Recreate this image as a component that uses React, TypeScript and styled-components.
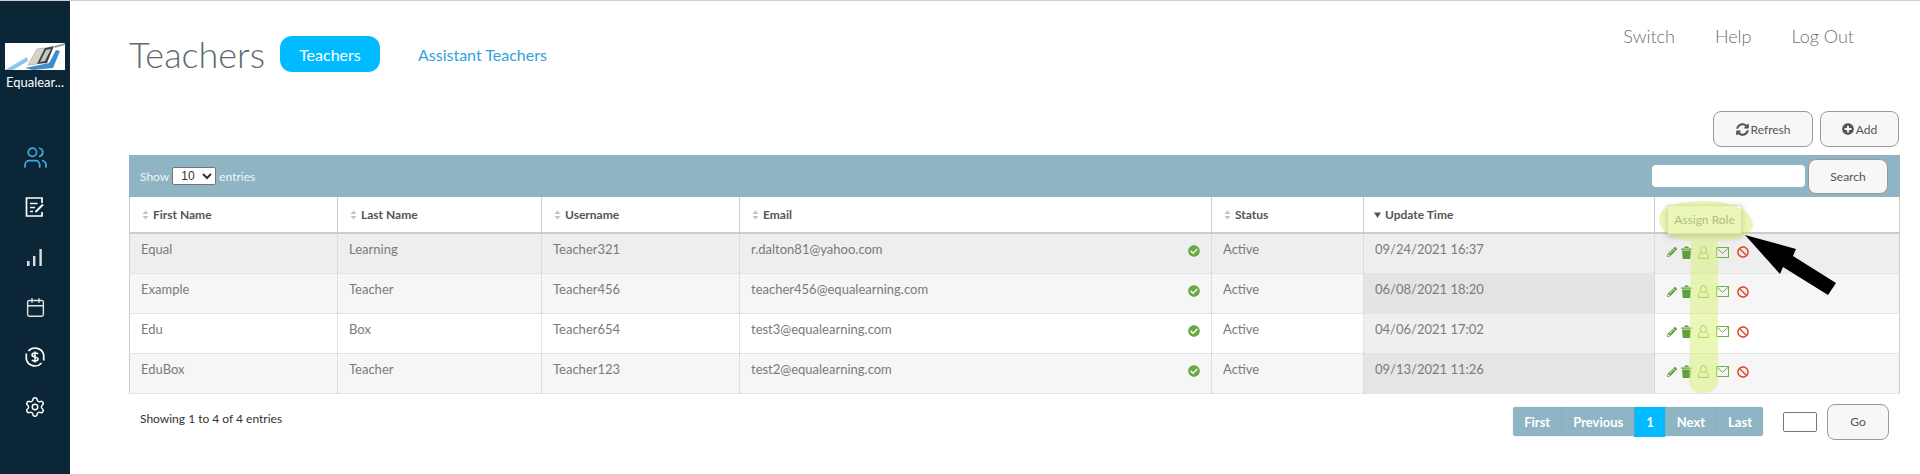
import React from 'react'
import styled, { createGlobalStyle } from 'styled-components'
import { Users, Calendar, Settings } from 'lucide-react'
import { FaSyncAlt, FaPlusCircle, FaCheckCircle, FaPencilAlt, FaBan } from 'react-icons/fa'

const GlobalStyle = createGlobalStyle`
  html, body {
    margin: 0;
    padding: 0;
    background: #ffffff;
    font-family: Lato, "Liberation Sans", sans-serif;
  }
  * { box-sizing: border-box; }
`

const rows = [
  { first: 'Equal', last: 'Learning', user: 'Teacher321', email: 'r.dalton81@yahoo.com', time: '09/24/2021 16:37' },
  { first: 'Example', last: 'Teacher', user: 'Teacher456', email: 'teacher456@equalearning.com', time: '06/08/2021 18:20' },
  { first: 'Edu', last: 'Box', user: 'Teacher654', email: 'test3@equalearning.com', time: '04/06/2021 17:02' },
  { first: 'EduBox', last: 'Teacher', user: 'Teacher123', email: 'test2@equalearning.com', time: '09/13/2021 11:26' },
]

const columns = [
  { label: 'First Name', width: 208 },
  { label: 'Last Name', width: 204 },
  { label: 'Username', width: 198 },
  { label: 'Email', width: 472 },
  { label: 'Status', width: 152 },
  { label: 'Update Time', width: 291, sorted: true },
]

function SortCarets() {
  return (
    <svg width="7" height="10" viewBox="0 0 7 10">
      <path d="M3.5 0.5 L6.5 4 L0.5 4 Z M3.5 9.5 L6.5 6 L0.5 6 Z" fill="#c4c4c4" />
    </svg>
  )
}

function SortDown() {
  return (
    <SortDownSvg width="7" height="10" viewBox="0 0 7 10">
      <path d="M0 2.5 L7 2.5 L3.5 8 Z" fill="#555555" />
    </SortDownSvg>
  )
}

function Logo() {
  return (
    <LogoBox viewBox="0 0 60 27" preserveAspectRatio="none">
      <rect width="60" height="27" fill="#ffffff" />
      <path d="M0 27 L22 14 L23 18 L8 27 Z" fill="#8ec7e6" />
      <path d="M20 25 L44 20 L51 7 L55 8 L48 25 L28 27 Z" fill="#3f8ecb" />
      <path d="M23 22 L32 6 L40 5 L32 21 Z" fill="#d9d2c6" stroke="#b9b2a8" strokeWidth="0.8" />
      <path d="M32 21 L40 5 L49 3 L42 20 Z" fill="#3a444c" />
      <path d="M35 19 L41 7 L46 6 L40 18 Z" fill="#cfc8bc" />
      <path d="M49 3 L60 0 L60 2 L50 5 Z" fill="#9aa3a8" />
    </LogoBox>
  )
}

function DocIcon() {
  return (
    <svg width="20" height="20" viewBox="0 0 20 20" fill="none" stroke="#ffffff" strokeWidth="1.7">
      <path d="M17 6 V1 H1.5 V19 H17 V15" />
      <path d="M5 6.5 H12.5 M5 10.5 H10 M5 14.5 H8" />
      <path d="M10.5 15 L18 7.5" strokeWidth="2" />
    </svg>
  )
}

function BarsIcon() {
  return (
    <svg width="16" height="17" viewBox="0 0 16 17" fill="#d9dee2">
      <rect x="0" y="12" width="2.6" height="5" />
      <rect x="6" y="7" width="2.4" height="10" />
      <rect x="12.4" y="0" width="2.4" height="17" />
    </svg>
  )
}

function MoneyIcon() {
  return (
    <svg width="20" height="20" viewBox="0 0 20 20" fill="none" stroke="#ffffff" strokeWidth="1.7">
      <path d="M3.4 4 A9 9 0 0 1 18.8 8" />
      <path d="M16.6 16 A9 9 0 0 1 1.2 12" />
      <path d="M1.3 6.5 V12 M18.7 8 V13.5" />
      <path d="M13 7 C12 5.5 7 5.5 7 8 C7 10.5 13 9.5 13 12 C13 14.5 8 14.5 7 13 M10 4.5 V15.5" strokeWidth="1.6" />
    </svg>
  )
}

function TrashIcon() {
  return (
    <svg width="11" height="13" viewBox="0 0 11 13">
      <path d="M0 2.6 H11 V3.8 H0 Z M3.6 1 C4.5 0 6.5 0 7.4 1 L8 2 H3 Z" fill="#5da139" />
      <path d="M1 4.6 H10 L9.2 13 H1.8 Z" fill="#5da139" />
    </svg>
  )
}

function UserIcon() {
  return (
    <svg width="11" height="13" viewBox="0 0 11 13" fill="none" stroke="#84bd4a" strokeWidth="1">
      <ellipse cx="5.5" cy="4" rx="3" ry="3.5" />
      <path d="M3.1 6.6 C1.2 7.6 0.5 9 0.5 12.4 H10.5 C10.5 9 9.8 7.6 7.9 6.6" />
    </svg>
  )
}

function MailIcon() {
  return (
    <svg width="13" height="11" viewBox="0 0 13 11" fill="none" stroke="#6cb04a" strokeWidth="1">
      <rect x="0.5" y="0.5" width="12" height="10" />
      <path d="M0.5 0.8 L6.5 6.4 L12.5 0.8" />
    </svg>
  )
}

export default function App() {
  return (
    <Page>
      <GlobalStyle />
      <Sidebar>
        <Logo />
        <OrgName>Equalear...</OrgName>
        <NavIcons>
          <NavSlot><Users size={25} color="#3ea8dd" strokeWidth={1.7} /></NavSlot>
          <NavSlot><DocIcon /></NavSlot>
          <NavSlot><BarsIcon /></NavSlot>
          <NavSlot><Calendar size={21} color="#dfe4e7" strokeWidth={1.6} /></NavSlot>
          <NavSlot><MoneyIcon /></NavSlot>
          <NavSlot><Settings size={22} color="#ffffff" strokeWidth={1.6} /></NavSlot>
        </NavIcons>
      </Sidebar>

      <Main>
        <Header>
          <TitleRow>
            <Title>Teachers</Title>
            <TabPill>Teachers</TabPill>
            <TabLink>Assistant Teachers</TabLink>
          </TitleRow>
          <TopLinks>
            <TopLink>Switch</TopLink>
            <TopLink>Help</TopLink>
            <TopLink>Log Out</TopLink>
          </TopLinks>
        </Header>

        <Actions>
          <ActionButton $width={100}><FaSyncAlt size={13} color="#555" />Refresh</ActionButton>
          <ActionButton $width={79}><FaPlusCircle size={12} color="#555" />Add</ActionButton>
        </Actions>

        <Toolbar>
          <ShowLabel>
            Show
            <EntriesSelect defaultValue="10">
              <option>10</option>
              <option>25</option>
            </EntriesSelect>
            entries
          </ShowLabel>
          <SearchGroup>
            <SearchInput />
            <SearchButton>Search</SearchButton>
          </SearchGroup>
        </Toolbar>

        <Table>
          <colgroup>
            {columns.map((c) => <col key={c.label} width={c.width} />)}
            <col />
          </colgroup>
          <thead>
            <tr>
              {columns.map((c) => (
                <HeadCell key={c.label}>
                  <HeadInner>
                    {c.sorted ? <SortDown /> : <SortCarets />}
                    {c.label}
                  </HeadInner>
                </HeadCell>
              ))}
              <HeadCell>
                <Tooltip>Assign Role</Tooltip>
              </HeadCell>
            </tr>
          </thead>
          <tbody>
            {rows.map((r, i) => (
              <Row key={r.user} $index={i}>
                <Cell>{r.first}</Cell>
                <Cell>{r.last}</Cell>
                <Cell>{r.user}</Cell>
                <Cell>
                  <EmailInner>
                    {r.email}
                    <FaCheckCircle size={12} color="#6aa93f" />
                  </EmailInner>
                </Cell>
                <Cell>Active</Cell>
                <TimeCell $index={i}>{r.time}</TimeCell>
                <Cell>
                  <IconRow>
                    <FaPencilAlt size={10} color="#5da139" />
                    <TrashIcon />
                    <UserIcon />
                    <MailIcon />
                    <FaBan size={12} color="#e2492f" />
                  </IconRow>
                </Cell>
              </Row>
            ))}
          </tbody>
        </Table>

        <Footer>
          <Showing>Showing 1 to 4 of 4 entries</Showing>
          <Pager>
            <PageButton>First</PageButton>
            <PageButton>Previous</PageButton>
            <CurrentPage>1</CurrentPage>
            <PageButton>Next</PageButton>
            <PageButton>Last</PageButton>
          </Pager>
          <GoInput />
          <GoButton>Go</GoButton>
        </Footer>
      </Main>

      {/* marker scribble and arrow drawn on top of the screenshot */}
      <Annotation viewBox="0 0 1920 474">
        <path
          d="M1659 218 C1660 206 1680 201 1705 201 C1735 201 1753 212 1753 225 C1753 236 1735 241 1718 241 L1718 380 C1718 390 1710 393 1702 393 C1694 393 1689 389 1689 380 L1691 241 C1672 240 1659 230 1659 218 Z"
          fill="rgba(214, 240, 110, 0.5)"
        />
        <path
          d="M1745 235 L1796 249 L1793 256 L1836 283 L1828 295 L1783 267 L1780 274 Z"
          fill="#000000"
        />
      </Annotation>
    </Page>
  )
}

const Page = styled.div`
  position: relative;
  display: flex;
  width: 1920px;
  height: 474px;
  overflow: hidden;
  border-top: 1px solid #cfcfcf;
  background: #ffffff;
`

const Sidebar = styled.aside`
  width: 70px;
  flex-shrink: 0;
  background: #0a2637;
  display: flex;
  flex-direction: column;
  align-items: center;
  padding-top: 42px;
`

const LogoBox = styled.svg`
  width: 60px;
  height: 27px;
  display: block;
  filter: blur(0.4px);
`

const OrgName = styled.div`
  margin-top: 5px;
  width: 60px;
  font-size: 13px;
  line-height: 15px;
  color: #ffffff;
  text-align: center;
  white-space: nowrap;
`

const NavIcons = styled.nav`
  margin-top: 42px;
  display: flex;
  flex-direction: column;
  align-items: center;
`

const NavSlot = styled.div`
  width: 70px;
  height: 50px;
  display: flex;
  align-items: center;
  justify-content: center;
`

const Main = styled.main`
  flex: 1;
  min-width: 0;
  padding: 0 20px 0 59px;
`

const Header = styled.header`
  height: 110px;
  display: flex;
  justify-content: space-between;
  align-items: flex-start;
`

const TitleRow = styled.div`
  display: flex;
  align-items: center;
  margin-top: 35px;
`

const Title = styled.h1`
  margin: 0 15px 0 0;
  font-size: 36px;
  line-height: 36px;
  font-weight: 300;
  color: #5e6b74;
`

const TabPill = styled.div`
  width: 100px;
  height: 36px;
  border-radius: 12px;
  background: #00bbff;
  color: #ffffff;
  font-size: 16px;
  display: flex;
  align-items: center;
  justify-content: center;
`

const TabLink = styled.div`
  margin-left: 38px;
  font-size: 16px;
  color: #2ea3dc;
`

const TopLinks = styled.div`
  display: flex;
  gap: 40px;
  margin-top: 24px;
  padding-right: 46px;
`

const TopLink = styled.div`
  font-size: 18px;
  line-height: 22px;
  font-weight: 300;
  color: #6f6f6f;
`

const Actions = styled.div`
  display: flex;
  justify-content: flex-end;
  gap: 7px;
  height: 36px;
  padding-right: 1px;
  margin-bottom: 8px;
`

const ActionButton = styled.div<{ $width: number }>`
  width: ${(p) => p.$width}px;
  height: 36px;
  border: 1px solid #999999;
  border-radius: 8px;
  background: #f7f7f7;
  color: #555555;
  font-size: 12px;
  display: flex;
  align-items: center;
  justify-content: center;
  gap: 2px;
`

const Toolbar = styled.div`
  height: 42px;
  background: #8fb4c4;
  display: flex;
  align-items: center;
  justify-content: space-between;
  padding: 0 12px 0 11px;
`

const ShowLabel = styled.div`
  display: flex;
  align-items: center;
  gap: 3px;
  font-size: 12px;
  color: #f1f5f7;
`

const EntriesSelect = styled.select`
  width: 44px;
  height: 18px;
  padding: 0 0 0 4px;
  font-family: "Liberation Sans", sans-serif;
  font-size: 12px;
  color: #333333;
  background: #ffffff;
  border: 1px solid #767676;
  border-radius: 2px;
`

const SearchGroup = styled.div`
  display: flex;
  align-items: center;
  gap: 3px;
`

const SearchInput = styled.input`
  width: 153px;
  height: 22px;
  border: none;
  border-radius: 4px;
  background: #ffffff;
`

const SearchButton = styled.div`
  width: 80px;
  height: 35px;
  border: 1px solid #999999;
  border-radius: 8px;
  background: #f7f7f7;
  color: #555555;
  font-size: 12px;
  display: flex;
  align-items: center;
  justify-content: center;
`

const Table = styled.table`
  width: 100%;
  table-layout: fixed;
  border-collapse: collapse;
  border: 1px solid #cccccc;
  border-top: none;
  font-size: 13px;
  color: #7a7a7a;
`

const HeadCell = styled.th`
  position: relative;
  height: 36px;
  padding: 0 11px;
  border-left: 1px solid #cccccc;
  border-right: 1px solid #cccccc;
  border-bottom: 2px solid #cccccc;
  background: #ffffff;
  text-align: left;
  font-size: 12px;
  font-weight: 700;
  color: #555555;
`

const HeadInner = styled.div`
  display: flex;
  align-items: center;
  gap: 4px;
  padding-left: 1px;
`

const SortDownSvg = styled.svg`
  margin-left: -2px;
`

const Tooltip = styled.div`
  position: absolute;
  left: 12px;
  top: 8px;
  width: 75px;
  height: 29px;
  background: #ffffff;
  border: 1px solid #d8d8d8;
  border-radius: 2px;
  box-shadow: 0 2px 6px rgba(0, 0, 0, 0.3);
  color: #8a8a8a;
  font-size: 12px;
  font-weight: 400;
  display: flex;
  align-items: center;
  justify-content: center;
  z-index: 1;
`

const rowColors = ['#eeeeee', '#f6f6f6', '#ffffff', '#f6f6f6']
const timeColors = ['#eeeeee', '#e4e4e4', '#efefef', '#e5e5e5']

const Row = styled.tr<{ $index: number }>`
  height: 40px;
  background: ${(p) => rowColors[p.$index]};
  border-bottom: 1px solid #e4e4e4;
`

const Cell = styled.td`
  padding: 7px 11px 0;
  vertical-align: top;
  line-height: 16px;
  border-left: 1px dotted #c8c8c8;
`

const TimeCell = styled(Cell)<{ $index: number }>`
  background: ${(p) => timeColors[p.$index]};
`

const EmailInner = styled.div`
  display: flex;
  justify-content: space-between;
  align-items: flex-start;
  padding-right: 1px;

  svg {
    margin-top: 4px;
    margin-right: -1px;
  }
`

const IconRow = styled.div`
  display: flex;
  align-items: center;
  height: 22px;
  padding-left: 1px;
  gap: 4px;

  svg:nth-child(3) { margin-left: 2px; }
  svg:nth-child(4) { margin-left: 3px; }
  svg:nth-child(5) { margin-left: 4px; }
`

const Footer = styled.div`
  display: flex;
  align-items: center;
  margin-top: 10px;
  padding: 0 11px;
  height: 36px;
`

const Showing = styled.div`
  margin-right: auto;
  padding-bottom: 7px;
  font-size: 12px;
  color: #333333;
`

const Pager = styled.div`
  display: flex;
  align-items: center;
  height: 29px;
  background: #8fb4c4;
  border-radius: 3px;
  box-shadow: 0 0 1px #999999;
`

const PageButton = styled.div`
  padding: 0 11px;
  height: 29px;
  display: flex;
  align-items: center;
  font-size: 13px;
  font-weight: 700;
  color: #ffffff;

  & + & {
    border-left: 1px dotted #7fa5b5;
  }
`

const CurrentPage = styled(PageButton)`
  height: 30px;
  background: #00bbff;
`

const GoInput = styled.input`
  width: 34px;
  height: 20px;
  margin-left: 20px;
  border: 1px solid #767676;
  border-radius: 2px;
  background: #ffffff;
`

const GoButton = styled.div`
  width: 62px;
  height: 36px;
  margin-left: 10px;
  border: 1px solid #999999;
  border-radius: 8px;
  background: #f7f7f7;
  color: #555555;
  font-size: 12px;
  display: flex;
  align-items: center;
  justify-content: center;
`

const Annotation = styled.svg`
  position: absolute;
  left: 0;
  top: -1px;
  width: 1920px;
  height: 474px;
  pointer-events: none;
  z-index: 2;
`
